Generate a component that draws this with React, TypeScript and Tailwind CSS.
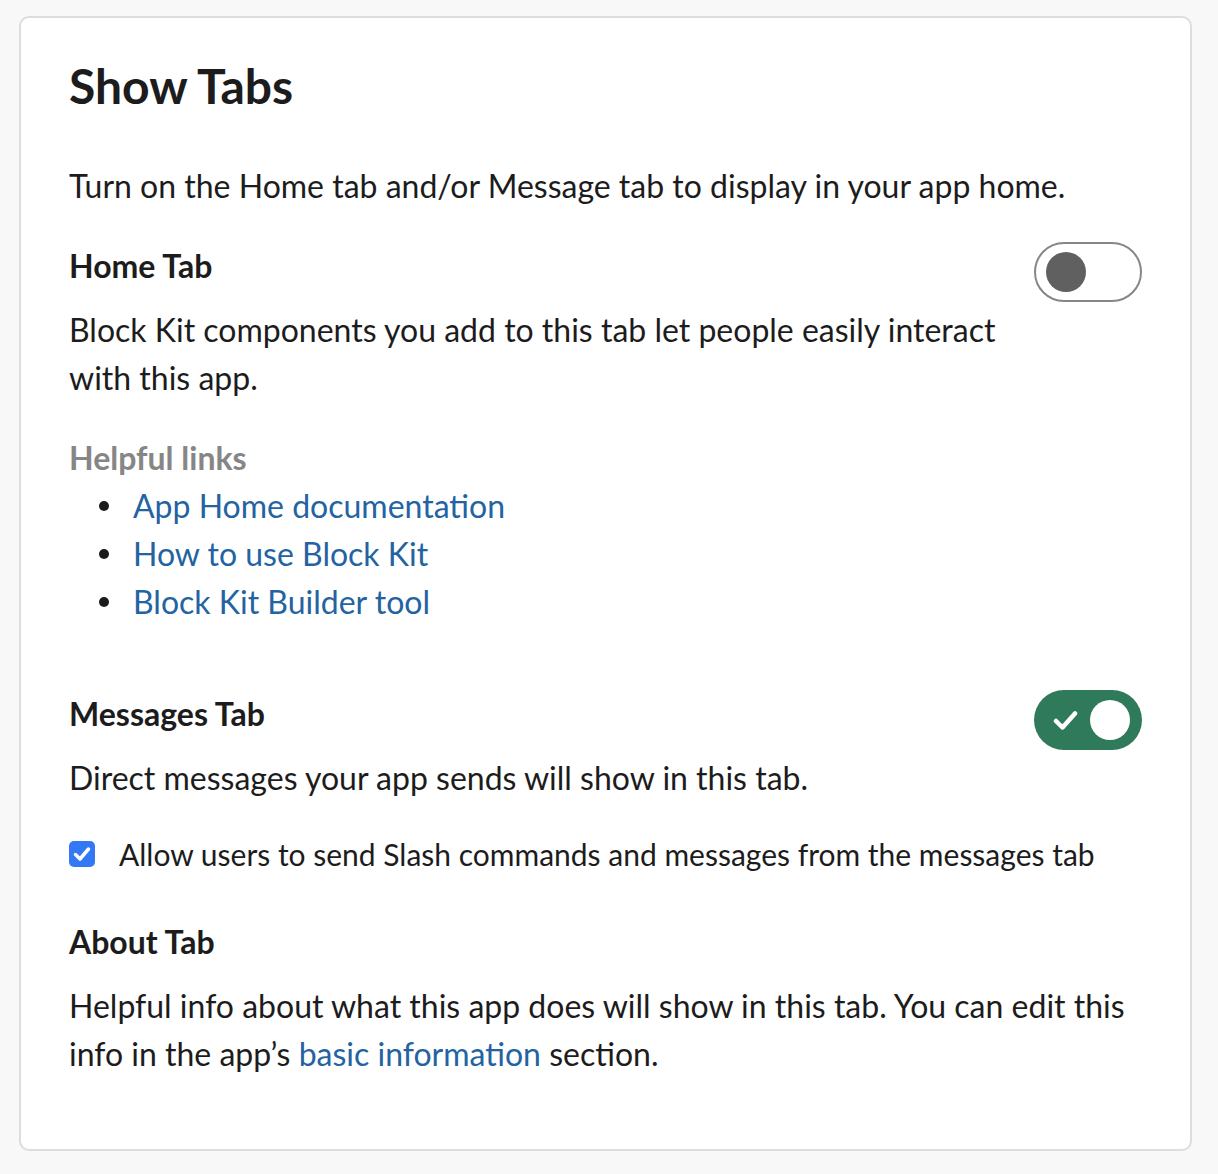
import React from 'react'

const Toggle = ({ on }: { on: boolean }) => {
  if (on) {
    return (
      <div className="flex h-[60px] w-[108px] shrink-0 items-center justify-between rounded-full bg-[#2f7a5b] pl-[19px] pr-[12px]">
        <svg width="25" height="21" viewBox="0 0 25 21" fill="none">
          <path d="M3 11l6.5 6.5L22 3.5" stroke="white" strokeWidth="4.5" strokeLinecap="round" strokeLinejoin="round" />
        </svg>
        <div className="h-[40px] w-[40px] rounded-full bg-white" />
      </div>
    )
  }
  return (
    <div className="flex h-[60px] w-[108px] shrink-0 items-center rounded-full border-2 border-[#868686] bg-white pl-[10px]">
      <div className="h-[40px] w-[40px] rounded-full bg-[#616061]" />
    </div>
  )
}

const links = ['App Home documentation', 'How to use Block Kit', 'Block Kit Builder tool']

export default function App() {
  return (
    <div className="min-h-[1174px] bg-[#f8f8f8] pl-[19px] pr-[26px] pt-[16px] pb-[22px] font-['Lato',sans-serif] text-[32px] leading-[48px] text-[#1d1c1d]">
      <div className="rounded-[10px] border-2 border-[#dddddd] bg-white px-[48px] pt-[38px] pb-[71px]">
        <h2 className="text-[48px] font-bold leading-[60px]">Show Tabs</h2>

        <p className="mt-[46px]">Turn on the Home tab and/or Message tab to display in your app home.</p>

        {/* Home tab */}
        <div className="mt-[32px] flex items-start gap-[32px]">
          <div className="flex-1">
            <h3 className="font-bold">Home Tab</h3>
            <p className="mt-[16px]">
              Block Kit components you add to this tab let people easily interact with this app.
            </p>
          </div>
          <Toggle on={false} />
        </div>

        <div className="mt-[32px] font-bold text-[#868686]">Helpful links</div>
        <ul>
          {links.map((l) => (
            <li key={l} className="flex items-center">
              <span className="ml-[30px] mr-[24px] h-[10px] w-[10px] rounded-full bg-[#1d1c1d]" />
              <a className="text-[#2363a2]">{l}</a>
            </li>
          ))}
        </ul>

        {/* Messages tab */}
        <div className="mt-[64px] flex items-start gap-[32px]">
          <div className="flex-1">
            <h3 className="font-bold">Messages Tab</h3>
            <p className="mt-[16px]">Direct messages your app sends will show in this tab.</p>
          </div>
          <Toggle on />
        </div>

        <label className="mt-[28px] flex items-center text-[30px]">
          <span className="flex h-[26px] w-[26px] shrink-0 items-center justify-center rounded-[5px] bg-[#3478f6]">
            <svg width="20" height="18" viewBox="0 0 20 18" fill="none">
              <path d="M3.5 9.5l4.5 4.5L16.5 4" stroke="white" strokeWidth="3.5" strokeLinecap="round" strokeLinejoin="round" />
            </svg>
          </span>
          <span className="ml-[24px]">Allow users to send Slash commands and messages from the messages tab</span>
        </label>

        {/* About tab */}
        <h3 className="mt-[40px] font-bold">About Tab</h3>
        <p className="mt-[16px]">
          Helpful info about what this app does will show in this tab. You can edit this info in the app’s{' '}
          <a className="text-[#2363a2]">basic information</a> section.
        </p>
      </div>
    </div>
  )
}
